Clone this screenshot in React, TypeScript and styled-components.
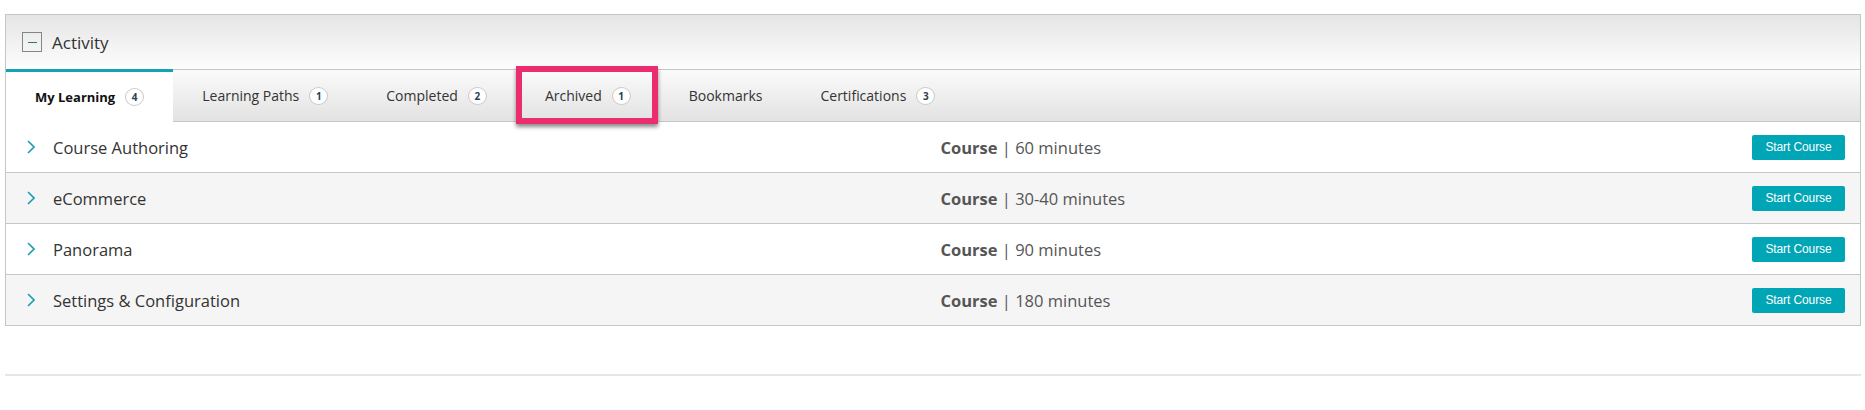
import React from 'react';
import styled, { createGlobalStyle, css } from 'styled-components';

const GlobalStyle = createGlobalStyle`
  body {
    margin: 0;
    background: #fff;
    font-family: 'Open Sans', 'Noto Sans', sans-serif;
    color: #333;
  }
`;

const Page = styled.div`
  padding: 14px 4px 0 5px;
`;

const Panel = styled.section`
  border: 1px solid #c6c6c6;
`;

const Header = styled.div`
  display: flex;
  align-items: center;
  gap: 10px;
  height: 54px;
  padding-left: 16px;
  background: linear-gradient(to bottom, #e5e5e5, #fdfdfd);
  border-bottom: 1px solid #c6c6c6;
`;

const Toggle = styled.button`
  display: flex;
  align-items: center;
  justify-content: center;
  width: 20px;
  height: 20px;
  padding: 0;
  box-sizing: border-box;
  border: 1px solid #858585;
  background: transparent;
`;

const MinusBar = styled.span`
  width: 9px;
  height: 1px;
  background: #2f7384;
`;

const Title = styled.h2`
  margin: 0;
  font-size: 17px;
  font-weight: 400;
  color: #333;
`;

const TabBar = styled.nav`
  display: flex;
  height: 51px;
  border-bottom: 1px solid #c6c6c6;
  background: linear-gradient(to bottom, #fbfbfb, #e2e2e2);
`;

const Tab = styled.div<{ $active?: boolean }>`
  position: relative;
  display: flex;
  align-items: center;
  gap: 10px;
  padding: 0 29px;
  font-size: 14px;
  color: #333;

  ${({ $active }) =>
    $active &&
    css`
      margin: -1px 0 -1px;
      border-top: 3px solid #14a3b5;
      background: #fff;
      font-size: 13px;
      font-weight: 700;
      color: #111;
    `}
`;

const Badge = styled.span`
  display: inline-flex;
  align-items: center;
  justify-content: center;
  width: 19px;
  height: 18px;
  box-sizing: border-box;
  border: 1px solid #c9c9c9;
  border-radius: 50%;
  background: #fff;
  font-size: 10px;
  font-weight: 700;
  color: #2c3e50;
`;

const Highlight = styled.span`
  position: absolute;
  top: -4px;
  bottom: -3px;
  left: 0;
  right: 2px;
  border: 6px solid #e92d6e;
  box-shadow: 0 3px 4px rgba(0, 0, 0, 0.45);
  pointer-events: none;
`;

const Row = styled.div<{ $striped: boolean }>`
  display: flex;
  align-items: center;
  height: 50px;
  padding-right: 15px;
  border-bottom: 1px solid #c6c6c6;
  background: ${({ $striped }) => ($striped ? '#f5f5f5' : '#fff')};

  &:first-of-type {
    height: 51px;
  }

  &:last-of-type {
    border-bottom: none;
  }
`;

const Lead = styled.div`
  display: flex;
  align-items: center;
  gap: 18px;
  flex: none;
  width: 50%;
  box-sizing: border-box;
  padding-left: 21px;
  font-size: 16.5px;
  color: #333;
`;

const Meta = styled.div`
  flex: 1;
  padding-left: 15px;
  font-size: 16.5px;
  color: #555;
`;

const StartButton = styled.button`
  width: 93px;
  height: 25px;
  padding: 0;
  border: none;
  border-radius: 2px;
  background: #00a5b6;
  color: #fff;
  font-family: 'Liberation Sans', Arial, sans-serif;
  font-size: 12px;
  letter-spacing: -0.1px;
`;

const Divider = styled.hr`
  margin: 48px 0 0;
  border: 0;
  height: 2px;
  background: #e6e6e6;
`;

const Chevron = () => (
  <svg width="8" height="14" viewBox="0 0 8 14">
    <polyline points="1,1 7,7 1,13" fill="none" stroke="#1a9fb2" strokeWidth="1.6" />
  </svg>
);

const tabs = [
  { label: 'My Learning', count: 4, active: true },
  { label: 'Learning Paths', count: 1 },
  { label: 'Completed', count: 2 },
  { label: 'Archived', count: 1, highlighted: true },
  { label: 'Bookmarks' },
  { label: 'Certifications', count: 3 },
];

const courses = [
  { title: 'Course Authoring', duration: '60 minutes' },
  { title: 'eCommerce', duration: '30-40 minutes' },
  { title: 'Panorama', duration: '90 minutes' },
  { title: 'Settings & Configuration', duration: '180 minutes' },
];

export default function App() {
  return (
    <Page>
      <GlobalStyle />
      <Panel>
        <Header>
          <Toggle aria-label="Collapse">
            <MinusBar />
          </Toggle>
          <Title>Activity</Title>
        </Header>
        <TabBar>
          {tabs.map((tab) => (
            <Tab key={tab.label} $active={tab.active}>
              {tab.label}
              {tab.count !== undefined && <Badge>{tab.count}</Badge>}
              {tab.highlighted && <Highlight />}
            </Tab>
          ))}
        </TabBar>
        {courses.map((course, i) => (
          <Row key={course.title} $striped={i % 2 === 1}>
            <Lead>
              <Chevron />
              {course.title}
            </Lead>
            <Meta>
              <b>Course</b> | {course.duration}
            </Meta>
            <StartButton>Start Course</StartButton>
          </Row>
        ))}
      </Panel>
      <Divider />
    </Page>
  );
}
